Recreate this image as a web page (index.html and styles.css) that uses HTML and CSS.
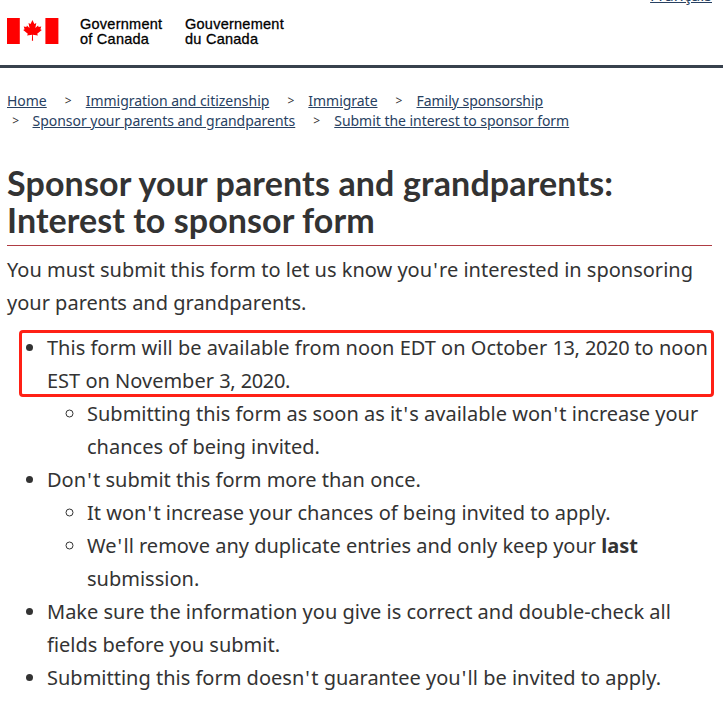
FILE: index.html
```html
<!DOCTYPE html>
<html lang="en">
<head>
<meta charset="utf-8">
<title>Sponsor your parents and grandparents</title>
<link rel="stylesheet" href="styles.css">
</head>
<body>
<header class="header">
  <div class="brand">
    <svg class="flag" viewBox="0 0 52 26" width="52" height="26"><path fill="#f00" d="M0 0h12.800v26H0zM38.400 0h13v26h-13zM25.500 2l-2 4-2-1 1 5-2.600-2.600-.5 1.500-2.700-.5.9 2.800-1.400.7 4.600 3.800-.7 1.700 5-.7-.2 6h1.200l-.2-6 5 .7-.7-1.700 4.600-3.800-1.400-.7.9-2.800-2.700.5-.5-1.500-2.800 2.600 1-5-2 1z"/></svg>
    <div class="wordmark">Government<br>of Canada</div>
    <div class="wordmark french">Gouvernement<br>du Canada</div>
  </div>
  <a class="lang" href="#">Français</a>
</header>
<nav class="crumbs">
  <div class="row"><a href="#">Home</a><i>&gt;</i><a href="#">Immigration and citizenship</a><i>&gt;</i><a href="#">Immigrate</a><i>&gt;</i><a href="#">Family sponsorship</a></div>
  <div class="row"><i class="first">&gt;</i><a href="#">Sponsor your parents and grandparents</a><i>&gt;</i><a href="#">Submit the interest to sponsor form</a></div>
</nav>
<main>
  <h1>Sponsor your parents and grandparents:<br><span class="second">Interest to sponsor form</span></h1>
  <p>You must submit this form to let us know you<b class="q">'</b>re interested in sponsoring your parents and grandparents.</p>
  <ul>
    <li><span class="highlighted">This form will be available from noon EDT on October <span class="num">13</span>, <span class="num">2020</span> to noon<br>EST on November <span class="num">3</span>, <span class="num">2020</span>.</span>
      <ul><li>Submitting this form as soon as it<b class="q">'</b>s available won<b class="q">'</b>t increase your chances of being invited.</li></ul>
    </li>
    <li>Don<b class="q">'</b>t submit this form more than once.
      <ul><li>It won<b class="q">'</b>t increase your chances of being invited to apply.</li><li>We<b class="q">'</b>ll remove any duplicate entries and only keep your <strong>last</strong> submission.</li></ul>
    </li>
    <li>Make sure the information you give is correct and double-check all fields before you submit.</li>
    <li>Submitting this form doesn<b class="q">'</b>t guarantee you<b class="q">'</b>ll be invited to apply.</li>
  </ul>
</main>
</body>
</html>
```
FILE: styles.css
```css
*, *::after { box-sizing: border-box; }
body { margin: 0; background: #fff; color: #333; font: 20px/33px "Noto Sans", sans-serif; overflow: hidden; }
.header { height: 68px; border-bottom: 3px solid #38414d; display: flex; justify-content: space-between; padding: 0 11px 0 7px; }
.brand { display: flex; padding-top: 17px; }
.flag { margin-top: 1px; }
.wordmark { width: 105px; margin-left: 21px; font: 14.5px/15px "Liberation Sans", sans-serif; letter-spacing: .25px; color: #000; white-space: nowrap; -webkit-text-stroke: .3px #000; }
.french { margin-left: 0; }
.lang { font-size: 16px; line-height: 20px; margin-top: -15px; }
a { color: #284162; text-decoration: underline; }
.crumbs { padding: 23px 7px 0; font-size: 14px; line-height: 20px; letter-spacing: -.03px; }
.row { display: flex; white-space: nowrap; }
.crumbs i { width: 39px; text-align: center; font-style: normal; font-size: 12px; padding-left: 4px; }
.crumbs .first { width: 25.5px; padding: 0 8px 0 0; }
main { padding: 0 11px 0 7px; }
h1 { margin: 33px 0 7px; padding-bottom: 7px; border-bottom: 1px solid #af3c43; font: 700 34px/37px Lato, sans-serif; letter-spacing: .15px; white-space: nowrap; }
.second { letter-spacing: .07px; }
p { margin: 0 0 12px; }
ul { margin: 0; padding-left: 40px; }
.q { font-weight: inherit; padding: 0 1.4px 0 1.1px; }
.num { letter-spacing: -.4px; }
.highlighted { position: relative; white-space: nowrap; }
.highlighted::after { content: ""; position: absolute; left: -28px; top: -4px; width: 695px; height: 67px; border: 3px solid #ff2015; border-radius: 4px; }
```
